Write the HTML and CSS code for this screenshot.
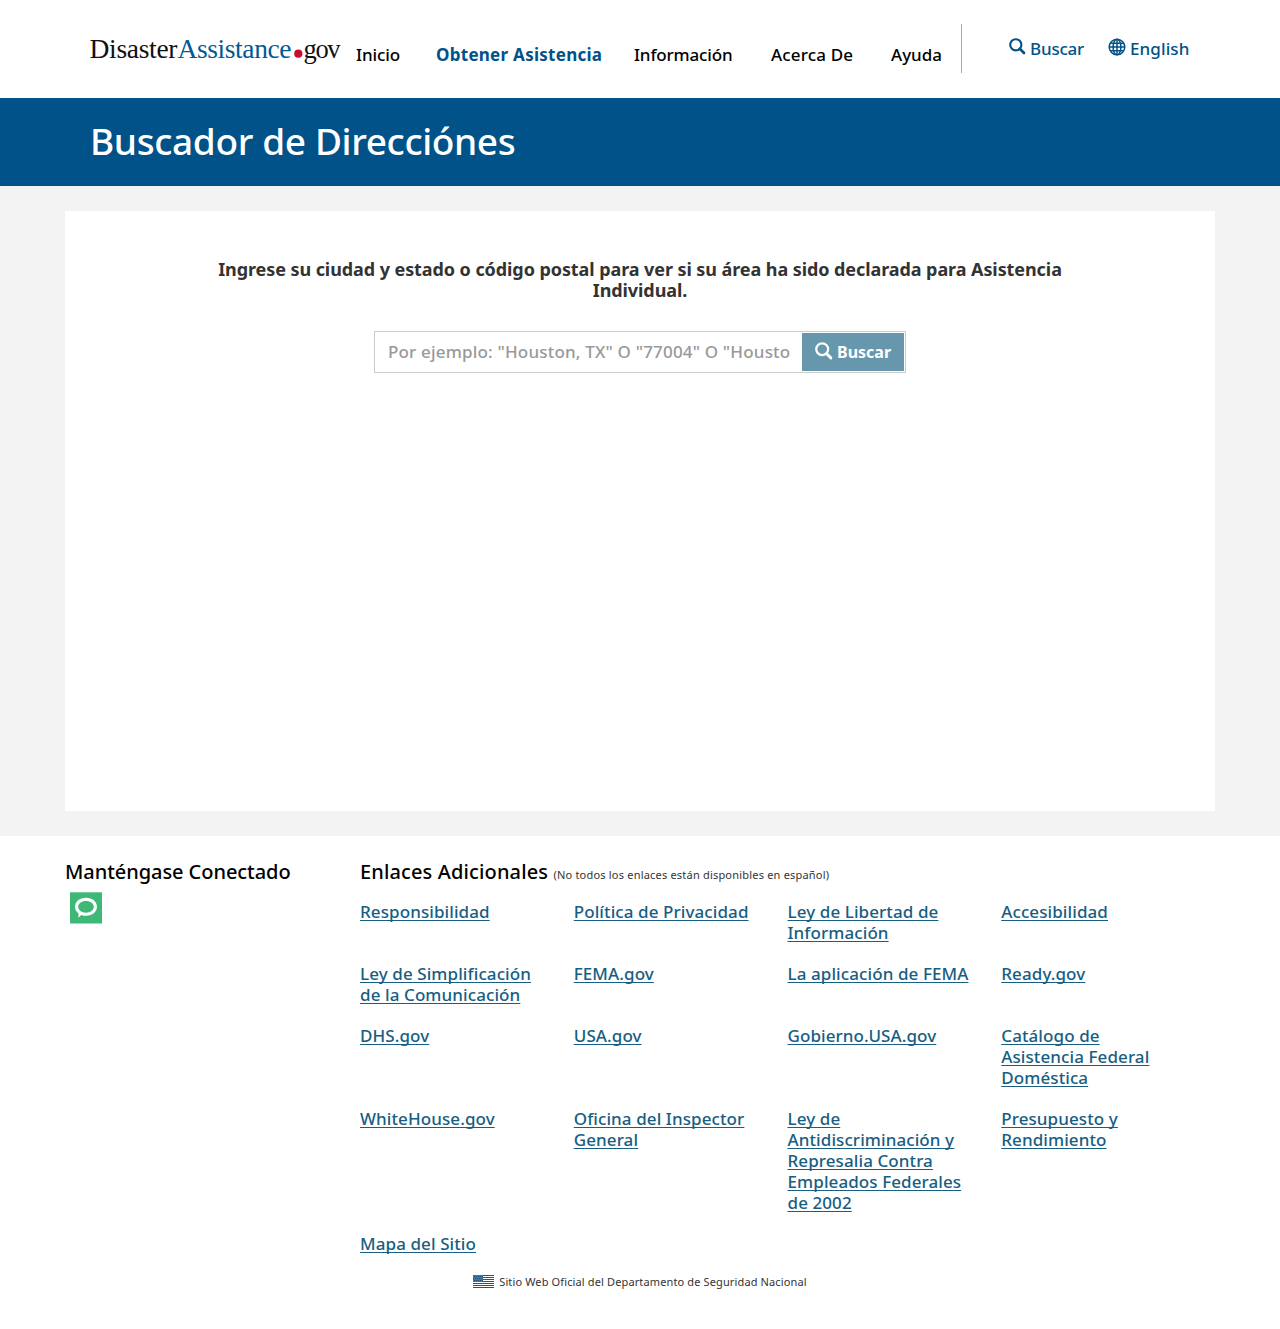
FILE: index.html
```
<!DOCTYPE html>
<html lang="es">
<head>
<meta charset="utf-8">
<title>Buscador de Direcciónes | DisasterAssistance.gov</title>
<link rel="stylesheet" href="styles.css">
</head>
<body>
<svg class="defs" width="0" height="0" aria-hidden="true">
  <symbol id="search" viewBox="0 0 17 17"><circle cx="6.8" cy="6.8" r="5.6" fill="none" stroke="currentColor" stroke-width="2.1"/><path d="M10.8 10.8L15 15" stroke="currentColor" stroke-width="2.7" stroke-linecap="round"/></symbol>
  <symbol id="globe" viewBox="0 0 18 18"><g fill="none" stroke="currentColor" stroke-width="1.5"><circle cx="9" cy="9" r="7.8"/><ellipse cx="9" cy="9" rx="3.9" ry="7.8"/><path d="M9 1v16M1 9h16M2.2 5.2h13.6M2.2 12.8h13.6"/></g></symbol>
</svg>
<header class="top">
  <a class="logo" href="#">
    <svg width="252" height="40" viewBox="0 0 252 40">
      <text x="-.5" y="27" textLength="88" class="logo-dark">Disaster</text>
      <text x="87.500" y="27" textLength="114" class="logo-blue">Assistance</text>
      <circle cx="208.3" cy="22.7" r="4.1" fill="#c8102e"/>
      <text x="213.500" y="27" textLength="37" class="logo-dark gov">gov</text>
    </svg>
  </a>
  <nav class="nav">
    <a href="#" class="inicio">Inicio</a>
    <a href="#" class="active">Obtener Asistencia</a>
    <a href="#" class="info">Información</a>
    <a href="#" class="acerca">Acerca De</a>
    <a href="#">Ayuda</a>
  </nav>
  <div class="tools">
    <a href="#" class="find"><svg width="17" height="17"><use href="#search"/></svg>Buscar</a>
    <a href="#" class="lang"><svg width="18" height="18"><use href="#globe"/></svg>English</a>
  </div>
</header>
<div class="banner"><h1>Buscador de Direcciónes</h1></div>
<main class="main">
  <section class="card">
    <p class="intro">Ingrese su ciudad y estado o código postal para ver si su área ha sido declarada para Asistencia Individual.</p>
    <form class="search">
      <input type="text" placeholder="Por ejemplo: &quot;Houston, TX&quot; O &quot;77004&quot; O &quot;Housto">
      <button type="button"><svg width="18" height="18"><use href="#search"/></svg>Buscar</button>
    </form>
  </section>
</main>
<footer class="footer">
  <div class="columns">
    <section class="connect">
      <h2>Manténgase Conectado</h2>
      <a href="#"><svg width="32" height="32" viewBox="0 0 32 32"><path fill="#3eb877" d="M0 .3h32v31.2H0z"/><path fill="#fff" fill-rule="evenodd" d="M16 5.8c6.300 0 11 3.900 11 9s-4.700 9-11 9c-1.700 0-3.300-.3-4.700-.9L8.200 25.800l.4-4.300C6.300 19.900 5 17.500 5 14.800c0-5.100 4.700-9 11-9zm0 3.100c-4.500 0-7.800 2.500-7.800 5.900s3.300 5.900 7.800 5.900 7.800-2.500 7.800-5.900-3.300-5.900-7.800-5.900z"/></svg></a>
    </section>
    <section class="links">
      <h2>Enlaces Adicionales <small>(No todos los enlaces están disponibles en español)</small></h2>
      <ul>
        <li><a href="#">Responsibilidad</a></li>
        <li><a href="#">Política de Privacidad</a></li>
        <li><a href="#">Ley de Libertad de Información</a></li>
        <li><a href="#">Accesibilidad</a></li>
        <li><a href="#">Ley de Simplificación de la Comunicación</a></li>
        <li><a href="#">FEMA.gov</a></li>
        <li><a href="#">La aplicación de FEMA</a></li>
        <li><a href="#">Ready.gov</a></li>
        <li><a href="#">DHS.gov</a></li>
        <li><a href="#">USA.gov</a></li>
        <li><a href="#">Gobierno.USA.gov</a></li>
        <li><a href="#">Catálogo de Asistencia Federal Doméstica</a></li>
        <li><a href="#">WhiteHouse.gov</a></li>
        <li><a href="#">Oficina del Inspector General</a></li>
        <li><a href="#">Ley de Antidiscriminación y Represalia Contra Empleados Federales de 2002</a></li>
        <li><a href="#">Presupuesto y Rendimiento</a></li>
        <li><a href="#">Mapa del Sitio</a></li>
      </ul>
    </section>
  </div>
  <p class="official">
    <svg width="21" height="13" viewBox="0 0 21 13" shape-rendering="crispEdges"><path fill="#fff" d="M0 0h21v13H0z"/><path fill="#cc1418" d="M0 0h21v1H0zM0 2h21v1H0zM0 4h21v1H0zM0 6h21v1H0zM0 8h21v1H0zM0 10h21v1H0zM0 12h21v1H0z"/><path fill="#3b76a8" d="M0 0h10v7H0z"/><path stroke="#24547f" stroke-dasharray="1 1" d="M1 1.500h9M0 3.500h9M1 5.500h9"/></svg>
    <span>Sitio Web Oficial del Departamento de Seguridad Nacional</span>
  </p>
</footer>
</body>
</html>
```
FILE: styles.css
```
* { box-sizing: border-box; }
body {
  margin: 0;
  background: #fff;
  color: #333;
  font: 500 17px/21px "Noto Sans", "Open Sans", sans-serif;
}
h1, h2, p, ul { margin: 0; padding: 0; }
a { color: inherit; text-decoration: none; }
svg { display: block; flex: none; }
.defs { position: absolute; }

.top {
  display: flex;
  height: 98px;
  padding: 24px 0 0 90px;
}
.logo { width: 266px; padding-top: 7px; }
.logo svg { overflow: visible; }
.logo text { font: 27.500px "Liberation Serif", serif; }
.logo .gov { font-size: 26.500px; }
.logo-dark { fill: #111; }
.logo-blue { fill: #005a96; }
.nav {
  display: grid;
  grid-template-columns: 80px 198px 137px 120px 71px;
  height: 49px;
  padding-top: 20px;
  border-right: 1px solid #aaa;
  color: #000;
  white-space: nowrap;
  width: 606px;
}
.inicio { letter-spacing: -.1px; }
.info { letter-spacing: -.15px; }
.acerca { letter-spacing: .15px; }
.nav .active { color: #005288; font-weight: 700; letter-spacing: .27px; }
.tools { display: flex; padding: 14px 0 0 47px; color: #005288; }
.tools a { display: flex; }
.find { width: 99px; letter-spacing: -.2px; }
.find svg { margin: 0 4px 0 0; }
.lang { letter-spacing: .1px; }
.lang svg { margin: 0 4px 0 0; }

.banner { height: 88px; padding: 21px 0 0 90px; background: #005288; }
.banner h1 {
  color: #fff;
  font-size: 37px;
  font-weight: 500;
  line-height: 44px;
  letter-spacing: -.37px;
}

.main { padding: 25px 65px; background: #f3f3f3; }
.card { height: 600px; padding-top: 48px; background: #fff; }
.intro {
  width: 880px;
  margin: 0 auto;
  font-size: 18px;
  font-weight: 700;
  letter-spacing: -.08px;
  text-align: center;
}
.search {
  display: flex;
  width: 532px;
  height: 42px;
  margin: 30px auto 0;
  padding: 1px;
  border: 1px solid #ccc;
}
.search input {
  width: 426px;
  padding: 0 9px 2px 12px;
  border: 0;
  outline: 0;
  background: none;
  font: inherit;
  letter-spacing: .18px;
}
.search input::placeholder { color: #999; opacity: 1; }
.search button {
  display: flex;
  width: 102px;
  padding: 9px 0 0 13px;
  border: 0;
  background: #6797ad;
  color: #fff;
  font: 700 16px/21px "Noto Sans", sans-serif;
}
.search button svg { margin: 0 4px 0 0; }

.footer { padding: 25px 65px 0; }
.columns { display: grid; grid-template-columns: 295px 855px; }
.footer h2 {
  color: #000;
  font-size: 20px;
  font-weight: 500;
  line-height: 22px;
  letter-spacing: .13px;
}
.footer .connect h2 { letter-spacing: -.06px; }
.connect a { display: block; padding: 9px 0 0 5px; }
.footer small {
  color: #333;
  font-size: 11px;
  font-weight: 400;
  letter-spacing: .2px;
}
.links ul {
  display: grid;
  grid-template-columns: repeat(4, 213.750px);
  row-gap: 20px;
  margin-top: 15px;
  list-style: none;
}
.links li { padding-right: 30px; letter-spacing: .09px; }
.links li a {
  color: #175e82;
  text-decoration: underline;
  text-decoration-thickness: 1px;
  text-decoration-skip-ink: none;
  text-underline-offset: 2px;
}
.official {
  display: flex;
  justify-content: center;
  gap: 5px;
  margin-top: 21px;
  font-size: 11px;
  font-weight: 400;
  line-height: 14px;
  letter-spacing: .13px;
}
```
